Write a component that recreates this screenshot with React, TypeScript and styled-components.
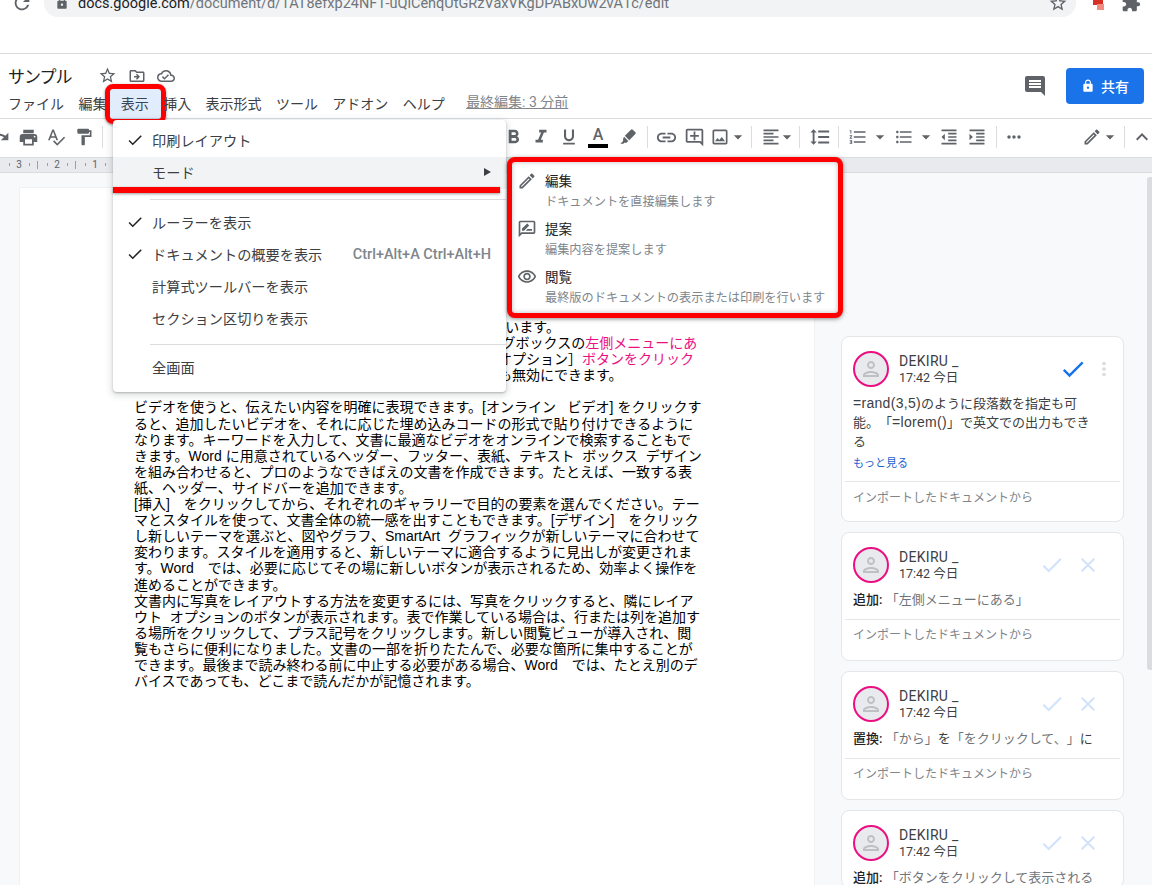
import React from "react";
import styled, { createGlobalStyle } from "styled-components";
import {
  MdArrowDropDown,
  MdCheck,
  MdClose,
  MdComment,
  MdExtension,
  MdFormatAlignLeft,
  MdFormatBold,
  MdFormatIndentDecrease,
  MdFormatIndentIncrease,
  MdFormatItalic,
  MdFormatLineSpacing,
  MdFormatListBulleted,
  MdFormatListNumbered,
  MdFormatPaint,
  MdFormatUnderlined,
  MdKeyboardArrowUp,
  MdLink,
  MdLock,
  MdMoreHoriz,
  MdMoreVert,
  MdOutlineAddComment,
  MdOutlineCloudDone,
  MdOutlineDriveFileMove,
  MdOutlineEdit,
  MdOutlineImage,
  MdOutlineRateReview,
  MdOutlinePerson,
  MdOutlineVisibility,
  MdPrint,
  MdRedo,
  MdRefresh,
  MdSpellcheck,
  MdStarBorder,
} from "react-icons/md";

const UI_FONT = `Roboto, "Noto Sans CJK JP", sans-serif`;
const DOC_FONT = `"Liberation Sans", "Noto Sans CJK JP", sans-serif`;
const RED = "#fe0000";
const PINK = "#ec0f82";

const GlobalStyle = createGlobalStyle`
  html, body {
    margin: 0;
    padding: 0;
    background: #fff;
    font-family: ${UI_FONT};
  }
  * {
    box-sizing: border-box;
    text-spacing-trim: space-all;
  }
`;

const Screen = styled.div`
  position: relative;
  width: 1152px;
  height: 885px;
  overflow: hidden;
  display: flex;
  flex-direction: column;
  background: #fff;
`;

const BrowserBar = styled.div`
  height: 17px;
  flex: none;
  overflow: hidden;
`;

const BrowserInner = styled.div`
  height: 28px;
  margin-top: -11px;
  display: flex;
  align-items: center;
  color: #5f6368;
`;

const ReloadSlot = styled.div`
  width: 44px;
  display: flex;
  justify-content: center;
`;

const Omnibox = styled.div`
  width: 1032px;
  height: 28px;
  border-radius: 14px;
  background: #f1f3f4;
  display: flex;
  align-items: center;
  padding: 0 8px 0 11px;
`;

const Url = styled.div`
  flex: 1;
  margin-left: 9px;
  font-size: 14.5px;
  color: #70757a;
  white-space: nowrap;
  b {
    font-weight: 400;
    color: #202124;
  }
`;

const ExtSlot = styled.div`
  flex: 1;
  display: flex;
  align-items: center;
  padding-left: 14px;
  gap: 15px;
`;

const Spacer = styled.div`
  height: 37px;
  flex: none;
  border-bottom: 1px solid #dadce0;
`;

const DocHeader = styled.header`
  height: 65px;
  flex: none;
  display: flex;
  justify-content: space-between;
  border-bottom: 1px solid #dadce0;
  padding: 8px 8px 0;
`;

const TitleRow = styled.div`
  height: 27px;
  display: flex;
  align-items: center;
  color: #5f6368;
`;

const Title = styled.div`
  font-size: 17px;
  color: #202124;
  width: 90px;
  letter-spacing: -1px;
`;

const TitleIcons = styled.div`
  display: flex;
  align-items: center;
  gap: 11px;
`;

const MenuBar = styled.nav`
  height: 28px;
  display: flex;
  align-items: center;
  gap: 14.4px;
  font-size: 14px;
  color: #3c4043;
`;

const MenuLabel = styled.span`
  position: relative;
  white-space: nowrap;
`;

const RedFrame = styled.span`
  position: absolute;
  left: -16px;
  right: -17px;
  top: -9px;
  bottom: -11px;
  border: 5px solid ${RED};
  border-radius: 8px;
  background: rgba(26, 115, 232, 0.13);
  box-shadow: 0 1px 3px rgba(0, 0, 0, 0.45);
`;

const LastEdit = styled.span`
  margin-left: 7px;
  margin-top: -4px;
  font-size: 14px;
  color: #80868b;
  text-decoration: underline;
  white-space: nowrap;
`;

const HeaderRight = styled.div`
  display: flex;
  align-items: center;
  gap: 19px;
  margin-top: -8px;
  color: #5f6368;
`;

const ShareButton = styled.button`
  width: 78px;
  height: 36px;
  border: 0;
  border-radius: 4px;
  background: #1a73e8;
  color: #fff;
  font: 500 14px ${UI_FONT};
  display: flex;
  align-items: center;
  justify-content: center;
  gap: 6px;
  padding: 0;
`;

const Toolbar = styled.div`
  height: 39px;
  flex: none;
  display: flex;
  align-items: center;
  margin-left: -14px;
  padding-bottom: 2px;
  color: #5f6368;
  border-bottom: 1px solid #dadce0;
`;

const ToolCell = styled.div<{ $w: number }>`
  width: ${(p) => p.$w}px;
  flex: none;
  display: flex;
  align-items: center;
  justify-content: center;
  svg {
    flex: none;
  }
`;

const ToolSep = styled.div`
  width: 1px;
  height: 22px;
  background: #dadce0;
`;

const TextColor = styled.div`
  width: 20px;
  display: flex;
  flex-direction: column;
  align-items: center;
  font: 500 16px/17px ${UI_FONT};
  &::after {
    content: "";
    width: 20px;
    height: 4px;
    margin-top: 1px;
    background: #000;
  }
`;

const Ruler = styled.div`
  height: 15px;
  flex: none;
  display: flex;
  background: #e8eaed;
  border-bottom: 1px solid #dadce0;
`;

const RulerUnit = styled.div`
  width: 38px;
  flex: none;
  text-align: center;
  font: 10px/14px ${UI_FONT};
  color: #5f6368;
  background-image: linear-gradient(#9aa0a6, #9aa0a6), linear-gradient(#9aa0a6, #9aa0a6),
    linear-gradient(#9aa0a6, #9aa0a6);
  background-repeat: no-repeat;
  background-size: 1px 3px, 1px 3px, 1px 8px;
  background-position: 9px 5px, 29px 5px, 37px 3px;
`;

const Canvas = styled.main`
  flex: 1;
  min-height: 0;
  display: flex;
  background: #f8f9fa;
  padding: 15px 0 0 20px;
`;

const Page = styled.section`
  width: 794px;
  flex: none;
  height: 900px;
  background: #fff;
  box-shadow: 0 0 0 0.5px #e8eaed;
  padding: 131px 100px 0 114px;
  font: 14px/16.1px ${DOC_FONT};
  color: #000;
`;

const DocLine = styled.div`
  white-space: pre;
  height: 16.1px;
`;

const Pink = styled.span`
  color: ${PINK};
`;

const CommentColumn = styled.aside`
  width: 283px;
  flex: none;
  margin-left: 27px;
  padding-top: 148px;
  display: flex;
  flex-direction: column;
  gap: 10px;
`;

const Card = styled.article`
  flex: none;
  background: #fff;
  border: 1px solid #e4e6e9;
  border-radius: 8px;
`;

const CardHead = styled.div`
  display: flex;
  align-items: center;
  padding: 14px 11px 0;
`;

const Avatar = styled.div`
  width: 36px;
  height: 36px;
  flex: none;
  border: 2px solid ${PINK};
  border-radius: 50%;
  background: #e8eaed;
  color: #bdc1c6;
  display: flex;
  align-items: center;
  justify-content: center;
`;

const Who = styled.div`
  margin-left: 10px;
  color: #3c4043;
`;

const Name = styled.div`
  font: 400 14px/17px ${UI_FONT};
  letter-spacing: 0.3px;
  color: #3c4043;
`;

const Time = styled.div`
  font: 12.5px/16px ${UI_FONT};
`;

const Actions = styled.div<{ $resolved?: boolean }>`
  margin-left: auto;
  display: flex;
  align-items: center;
  gap: ${(p) => (p.$resolved ? 6 : 11)}px;
  margin-right: ${(p) => (p.$resolved ? -3 : 12)}px;
`;

const CardBody = styled.div`
  margin-top: 7px;
  padding: 0 11px;
  font-size: 13px;
  line-height: 19px;
  color: #3c4043;
  white-space: nowrap;
  b {
    font-weight: 500;
    color: #202124;
  }
`;

const Latin = styled.span`
  font-family: "Liberation Sans", sans-serif;
  font-size: 14px;
  line-height: 1;
  letter-spacing: 0.3px;
`;

const Quoted = styled.span`
  color: #70757a;
`;

const More = styled.div`
  margin: 5px 11px 0;
  font-size: 11px;
  line-height: 16px;
  color: #1a5fd0;
`;

const CardFoot = styled.div<{ $tall?: boolean }>`
  margin: ${(p) => (p.$tall ? 9 : 10)}px 3px 0;
  height: ${(p) => (p.$tall ? 40 : 41)}px;
  border-top: 1px solid #e4e6e9;
  padding: ${(p) => (p.$tall ? 8 : 7)}px 8px 0;
  font-size: 12px;
  line-height: 16px;
  color: #80868b;
`;

const ScrollThumb = styled.div`
  position: absolute;
  right: 0;
  top: 177px;
  width: 5px;
  height: 493px;
  border-radius: 3px 0 0 3px;
  background: #dadce0;
`;

const ViewMenu = styled.div`
  position: absolute;
  left: 113px;
  top: 120px;
  width: 393px;
  padding: 5px 0 8px;
  background: #fff;
  border-radius: 4px;
  box-shadow: 0 2px 6px 2px rgba(60, 64, 67, 0.15), 0 1px 2px rgba(60, 64, 67, 0.3);
  font-size: 14.2px;
  color: #3c4043;
`;

const ViewItem = styled.div<{ $hover?: boolean }>`
  height: 32px;
  display: flex;
  align-items: center;
  padding: 0 15px 2px 39px;
  position: relative;
  white-space: nowrap;
  background: ${(p) => (p.$hover ? "#f1f3f4" : "transparent")};
`;

const CheckMark = styled.span`
  position: absolute;
  left: 13px;
  top: 6px;
  color: #202124;
  display: flex;
`;

const Shortcut = styled.span`
  margin-left: auto;
  font-weight: 500;
  font-size: 14.5px;
  color: #80868b;
`;

const SubArrow = styled.span`
  margin-left: auto;
  border-left: 7px solid #3c4043;
  border-top: 4px solid transparent;
  border-bottom: 4px solid transparent;
`;

const MenuSep = styled.div<{ $before: number; $after: number }>`
  height: 1px;
  margin: ${(p) => p.$before}px 0 ${(p) => p.$after}px 37px;
  background: #dadce0;
`;

const RedBar = styled.div`
  position: absolute;
  left: 113px;
  top: 187px;
  width: 387px;
  height: 6px;
  background: ${RED};
  box-shadow: 0 1px 3px rgba(0, 0, 0, 0.4);
`;

const ModeMenu = styled.div`
  position: absolute;
  left: 507px;
  top: 157px;
  width: 336px;
  height: 161px;
  border: 5px solid ${RED};
  border-radius: 8px;
  background: #fff;
  box-shadow: 0 1px 4px rgba(0, 0, 0, 0.45), inset 0 0 5px rgba(0, 0, 0, 0.25);
  padding-top: 3px;
`;

const ModeItem = styled.div`
  height: 48px;
  display: flex;
  align-items: flex-start;
  color: #5f6368;
`;

const ModeIcon = styled.div`
  width: 30px;
  height: 32px;
  flex: none;
  display: flex;
  align-items: center;
  justify-content: center;
`;

const ModeText = styled.div`
  padding: 7px 0 0 3px;
`;

const ModeTitle = styled.div`
  font-size: 13.5px;
  line-height: 18px;
  color: #202124;
`;

const ModeHint = styled.div`
  margin-top: 4px;
  font-size: 12.2px;
  line-height: 16px;
  color: #80868b;
  white-space: nowrap;
`;

const menus = ["ファイル", "編集", "表示", "挿入", "表示形式", "ツール", "アドオン", "ヘルプ"];

type Tool = { w: number; icon?: React.ReactNode; sep?: boolean };

const drop = <MdArrowDropDown size={20} />;

const Marker = (
  <svg width="20" height="20" viewBox="0 0 24 24" fill="currentColor">
    <path d="M15.5 3.2a1.6 1.6 0 0 1 2.2 0l3.1 3.1a1.6 1.6 0 0 1 0 2.2l-7.3 7.3-5.3-5.3z" />
    <path d="M7.3 11.6l5.1 5.1-2.2 2.2H7.6L6.4 20.1H2.8l3.3-3.4v-2.6z" />
  </svg>
);

const tools: Tool[] = [
  { w: 28, icon: <MdRedo size={20} /> },
  { w: 28, icon: <MdPrint size={21} /> },
  { w: 28, icon: <MdSpellcheck size={20} /> },
  { w: 28, icon: <MdFormatPaint size={20} /> },
  { w: 8, sep: true },
  { w: 393 },
  { w: 28, icon: <MdFormatBold size={23} /> },
  { w: 28, icon: <MdFormatItalic size={22} /> },
  { w: 28, icon: <MdFormatUnderlined size={20} /> },
  { w: 30, icon: <TextColor>A</TextColor> },
  { w: 30, icon: Marker },
  { w: 8, sep: true },
  { w: 30, icon: <MdLink size={23} /> },
  { w: 26, icon: <MdOutlineAddComment size={21} /> },
  { w: 26, icon: <MdOutlineImage size={20} /> },
  { w: 10, icon: drop },
  { w: 16, sep: true },
  { w: 24, icon: <MdFormatAlignLeft size={20} /> },
  { w: 8, icon: drop },
  { w: 16, sep: true },
  { w: 26, icon: <MdFormatLineSpacing size={22} /> },
  { w: 10, sep: true },
  { w: 30, icon: <MdFormatListNumbered size={20} /> },
  { w: 14, icon: drop },
  { w: 34, icon: <MdFormatListBulleted size={20} /> },
  { w: 10, icon: drop },
  { w: 36, icon: <MdFormatIndentDecrease size={20} /> },
  { w: 20, icon: <MdFormatIndentIncrease size={20} /> },
  { w: 18, sep: true },
  { w: 18, icon: <MdMoreHoriz size={20} /> },
  { w: 60 },
  { w: 18, icon: <MdOutlineEdit size={20} /> },
  { w: 18, icon: drop },
  { w: 10, sep: true },
  { w: 26, icon: <MdKeyboardArrowUp size={24} /> },
];

const docLines = [
  "ビデオを使うと、伝えたい内容を明確に表現できます。[オンライン   ビデオ] をクリックす",
  "ると、追加したいビデオを、それに応じた埋め込みコードの形式で貼り付けできるように",
  "なります。キーワードを入力して、文書に最適なビデオをオンラインで検索することもで",
  "きます。Word に用意されているヘッダー、フッター、表紙、テキスト  ボックス  デザイン",
  "を組み合わせると、プロのようなできばえの文書を作成できます。たとえば、一致する表",
  "紙、ヘッダー、サイドバーを追加できます。",
  "[挿入]　をクリックしてから、それぞれのギャラリーで目的の要素を選んでください。テー",
  "マとスタイルを使って、文書全体の統一感を出すこともできます。[デザイン]　をクリック",
  "し新しいテーマを選ぶと、図やグラフ、SmartArt  グラフィックが新しいテーマに合わせて",
  "変わります。スタイルを適用すると、新しいテーマに適合するように見出しが変更されま",
  "す。Word　では、必要に応じてその場に新しいボタンが表示されるため、効率よく操作を",
  "進めることができます。",
  "文書内に写真をレイアウトする方法を変更するには、写真をクリックすると、隣にレイア",
  "ウト  オプションのボタンが表示されます。表で作業している場合は、行または列を追加す",
  "る場所をクリックして、プラス記号をクリックします。新しい閲覧ビューが導入され、閲",
  "覧もさらに便利になりました。文書の一部を折りたたんで、必要な箇所に集中することが",
  "できます。最後まで読み終わる前に中止する必要がある場合、Word　では、たとえ別のデ",
  "バイスであっても、どこまで読んだかが記憶されます。",
];

const modes = [
  { icon: <MdOutlineEdit size={20} />, title: "編集", hint: "ドキュメントを直接編集します" },
  { icon: <MdOutlineRateReview size={20} />, title: "提案", hint: "編集内容を提案します" },
  { icon: <MdOutlineVisibility size={20} />, title: "閲覧", hint: "最終版のドキュメントの表示または印刷を行います" },
];

function CommentHead({ resolved }: { resolved?: boolean }) {
  return (
    <CardHead>
      <Avatar>
        <MdOutlinePerson size={24} />
      </Avatar>
      <Who>
        <Name>DEKIRU _</Name>
        <Time>17:42 今日</Time>
      </Who>
      {resolved ? (
        <Actions $resolved>
          <MdCheck size={28} color="#1a73e8" />
          <MdMoreVert size={22} color="#dadce0" />
        </Actions>
      ) : (
        <Actions>
          <MdCheck size={26} color="#d2e3fc" />
          <MdClose size={24} color="#d2e3fc" />
        </Actions>
      )}
    </CardHead>
  );
}

const FROM = "インポートしたドキュメントから";

export default function App() {
  return (
    <Screen>
      <GlobalStyle />
      <BrowserBar>
        <BrowserInner>
          <ReloadSlot>
            <MdRefresh size={22} />
          </ReloadSlot>
          <Omnibox>
            <MdLock size={14} />
            <Url>
              <b>docs.google.com</b>/document/d/1AT8efxp24NF1-uQiCehqUtGRzVaxVKgDPABxUw2vA1c/edit
            </Url>
            <MdStarBorder size={20} />
          </Omnibox>
          <ExtSlot>
            <svg width="16" height="16" viewBox="0 0 16 16">
              <path d="M3 1h7l3 3v6H3z" fill="#d93025" />
              <path d="M7 9h7v6H7z" fill="#f28b82" />
            </svg>
            <MdExtension size={20} />
          </ExtSlot>
        </BrowserInner>
      </BrowserBar>
      <Spacer />
      <DocHeader>
        <div>
          <TitleRow>
            <Title>サンプル</Title>
            <TitleIcons>
              <MdStarBorder size={19} />
              <MdOutlineDriveFileMove size={18} />
              <MdOutlineCloudDone size={18} />
            </TitleIcons>
          </TitleRow>
          <MenuBar>
            {menus.map((m) => (
              <MenuLabel key={m}>
                {m}
                {m === "表示" && <RedFrame />}
              </MenuLabel>
            ))}
            <LastEdit>最終編集: 3 分前</LastEdit>
          </MenuBar>
        </div>
        <HeaderRight>
          <MdComment size={24} />
          <ShareButton>
            <MdLock size={14} />
            共有
          </ShareButton>
        </HeaderRight>
      </DocHeader>
      <Toolbar>
        {tools.map((t, i) => (
          <ToolCell key={i} $w={t.w}>
            {t.sep ? <ToolSep /> : t.icon}
          </ToolCell>
        ))}
      </Toolbar>
      <Ruler>
        <RulerUnit>3</RulerUnit>
        <RulerUnit>2</RulerUnit>
        <RulerUnit>1</RulerUnit>
      </Ruler>
      <Canvas>
        <Page>
          <DocLine>まずここでは、コメントと提案モードの使い方を説明して  います。</DocLine>
          <DocLine>
            ページ余白や行数と字数の設定を変更するには、 ダイアログボックスの<Pink>左側メニューにあ</Pink>
          </DocLine>
          <DocLine>
            表示の設定画面を開くには、メニューの右側にある詳細［オプション］<Pink>ボタンをクリック</Pink>
          </DocLine>
          <DocLine>この同じ画面からは、ヘッダーやフッターの表示をいつでも無効にできます。</DocLine>
          <DocLine />
          {docLines.map((l) => (
            <DocLine key={l}>{l}</DocLine>
          ))}
        </Page>
        <CommentColumn>
          <Card>
            <CommentHead resolved />
            <CardBody>
              <Latin>=rand(3,5)</Latin>のように段落数を指定も可
              <br />
              能。「<Latin>=lorem()</Latin>」で英文での出力もでき
              <br />る
            </CardBody>
            <More>もっと見る</More>
            <CardFoot $tall>{FROM}</CardFoot>
          </Card>
          <Card>
            <CommentHead />
            <CardBody>
              <b>追加:</b> <Quoted>「左側メニューにある」</Quoted>
            </CardBody>
            <CardFoot>{FROM}</CardFoot>
          </Card>
          <Card>
            <CommentHead />
            <CardBody>
              <b>置換:</b> <Quoted>「から」</Quoted>を<Quoted>「をクリックして、」</Quoted>に
            </CardBody>
            <CardFoot>{FROM}</CardFoot>
          </Card>
          <Card>
            <CommentHead />
            <CardBody>
              <b>追加:</b> <Quoted>「ボタンをクリックして表示される</Quoted>
            </CardBody>
          </Card>
        </CommentColumn>
      </Canvas>
      <ScrollThumb />
      <ViewMenu>
        <ViewItem>
          <CheckMark>
            <MdCheck size={18} />
          </CheckMark>
          印刷レイアウト
        </ViewItem>
        <ViewItem $hover>
          モード
          <SubArrow />
        </ViewItem>
        <MenuSep $before={10} $after={7} />
        <ViewItem>
          <CheckMark>
            <MdCheck size={18} />
          </CheckMark>
          ルーラーを表示
        </ViewItem>
        <ViewItem>
          <CheckMark>
            <MdCheck size={18} />
          </CheckMark>
          ドキュメントの概要を表示
          <Shortcut>Ctrl+Alt+A Ctrl+Alt+H</Shortcut>
        </ViewItem>
        <ViewItem>計算式ツールバーを表示</ViewItem>
        <ViewItem>セクション区切りを表示</ViewItem>
        <MenuSep $before={9} $after={7} />
        <ViewItem>全画面</ViewItem>
      </ViewMenu>
      <RedBar />
      <ModeMenu>
        {modes.map((m) => (
          <ModeItem key={m.title}>
            <ModeIcon>{m.icon}</ModeIcon>
            <ModeText>
              <ModeTitle>{m.title}</ModeTitle>
              <ModeHint>{m.hint}</ModeHint>
            </ModeText>
          </ModeItem>
        ))}
      </ModeMenu>
    </Screen>
  );
}
